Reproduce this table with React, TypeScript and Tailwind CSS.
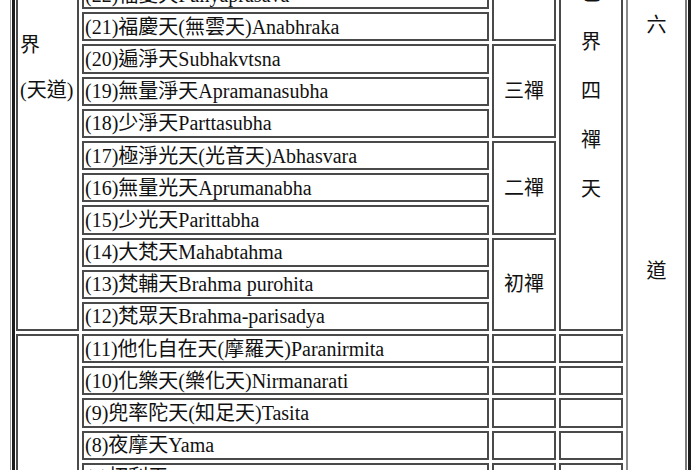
const rows = [
  "(22)福愛天Punyaprasava",
  "(21)福慶天(無雲天)Anabhraka",
  "(20)遍淨天Subhakvtsna",
  "(19)無量淨天Apramanasubha",
  "(18)少淨天Parttasubha",
  "(17)極淨光天(光音天)Abhasvara",
  "(16)無量光天Aprumanabha",
  "(15)少光天Parittabha",
  "(14)大梵天Mahabtahma",
  "(13)梵輔天Brahma purohita",
  "(12)梵眾天Brahma-parisadya",
  "(11)他化自在天(摩羅天)Paranirmita",
  "(10)化樂天(樂化天)Nirmanarati",
  "(9)兜率陀天(知足天)Tasita",
  "(8)夜摩天Yama",
  "(7)忉利天Trayastrimsa",
  "(6)四天王天Caturmaharajakayika",
];

const cell = "border-2 border-[#4a4a4a]";

const rowStarts = [
  "row-start-1",
  "row-start-2",
  "row-start-3",
  "row-start-4",
  "row-start-5",
  "row-start-6",
  "row-start-7",
  "row-start-8",
  "row-start-9",
  "row-start-10",
  "row-start-11",
  "row-start-12",
  "row-start-13",
  "row-start-14",
  "row-start-15",
  "row-start-16",
  "row-start-17",
];

export default function App() {
  return (
    <div
      className="h-[470px] w-[700px] overflow-hidden bg-white text-[20px] text-[#111]"
      style={{ fontFamily: '"Liberation Serif", "Noto Sans CJK TC", serif' }}
    >
      <div className="-mt-[20px] ml-[10px] w-fit border-l border-[#9a9a9a] pl-[1px]">
        <div className="border-x-[3px] border-[#1c1c1c] px-[1px]">
          <div className="grid grid-cols-[63px_407px_64px_64px_61px] auto-rows-[29.2px] gap-[3px]">
            {/* 界 (天道) */}
            <div className={`${cell} col-start-1 row-start-1 row-span-11 flex flex-col gap-[25px] pl-[2px] pt-[53px] leading-[20px]`}>
              <span>界</span>
              <span>(天道)</span>
            </div>
            <div className={`${cell} col-start-1 row-start-12 row-span-6`} />

            {rows.map((r, i) => (
              <div
                key={r}
                className={`${cell} col-start-2 ${rowStarts[i]} flex items-center whitespace-nowrap pl-[1px] leading-[20px]`}
              >
                {r}
              </div>
            ))}

            {/* 禪 column */}
            <div className={`${cell} col-start-3 row-start-1 row-span-2`} />
            <div className={`${cell} col-start-3 row-start-3 row-span-3 flex items-center justify-center`}>三禪</div>
            <div className={`${cell} col-start-3 row-start-6 row-span-3 flex items-center justify-center`}>二禪</div>
            <div className={`${cell} col-start-3 row-start-9 row-span-3 flex items-center justify-center`}>初禪</div>
            {rowStarts.slice(11).map((rs) => (
              <div key={"c3" + rs} className={`${cell} col-start-3 ${rs}`} />
            ))}

            {/* 色界四禪天 */}
            <div className={`${cell} col-start-4 row-start-1 row-span-11 flex flex-col items-center gap-[29px] pt-[1px] leading-[20px]`}>
              <span>色</span>
              <span>界</span>
              <span>四</span>
              <span>禪</span>
              <span>天</span>
            </div>
            {rowStarts.slice(11).map((rs) => (
              <div key={"c4" + rs} className={`${cell} col-start-4 ${rs}`} />
            ))}

            {/* 六道 */}
            <div className="col-start-5 row-start-1 row-span-17 flex flex-col items-center gap-[226px] border-2 border-l-[#8a8a8a] border-t-[#4a4a4a] border-r-[#7a7a7a] border-b-[#4a4a4a] pt-[33px] leading-[20px]">
              <span>六</span>
              <span>道</span>
            </div>
          </div>
        </div>
      </div>
    </div>
  );
}
